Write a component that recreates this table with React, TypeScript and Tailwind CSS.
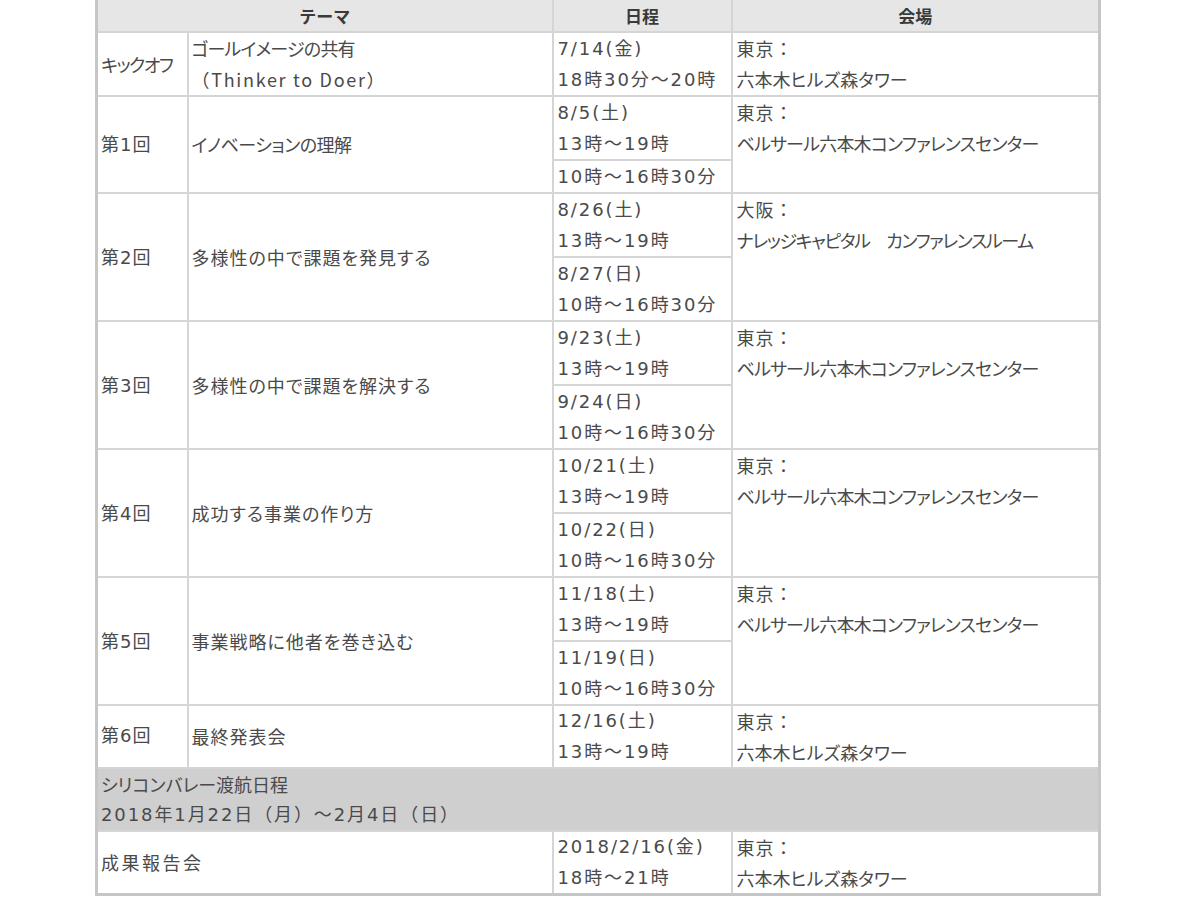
import React from "react";

const P = "[font-feature-settings:'palt']";
const TD = "border-2 border-[#d5d5d5] p-0 align-middle";
const LAT = "font-['DejaVu_Sans','Noto_Sans_CJK_JP',sans-serif]";

type Row = {
  label: string;
  theme: React.ReactNode;
  dates: string[][];
  city: string;
  place: string;
  placeCls: string;
};

const rows: Row[] = [
  {
    label: "キックオフ",
    theme: (
      <>
        <div className={`${P} tracking-[-0.8px]`}>ゴールイメージの共有</div>
        <div className="tracking-[1.7px]">（Thinker to Doer）</div>
      </>
    ),
    dates: [["7/14(金)", "18時30分〜20時"]],
    city: "東京：",
    place: "六本木ヒルズ森タワー",
    placeCls: "tracking-[0px]",
  },
  {
    label: "第1回",
    theme: <div className={`${P} tracking-[-0.5px]`}>イノベーションの理解</div>,
    dates: [["8/5(土)", "13時〜19時"], ["10時〜16時30分"]],
    city: "東京：",
    place: "ベルサール六本木コンファレンスセンター",
    placeCls: "tracking-[-0.8px]",
  },
  {
    label: "第2回",
    theme: <div className={P}>多様性の中で課題を発見する</div>,
    dates: [["8/26(土)", "13時〜19時"], ["8/27(日)", "10時〜16時30分"]],
    city: "大阪：",
    place: "ナレッジキャピタル　カンファレンスルーム",
    placeCls: "tracking-[-1.4px]",
  },
  {
    label: "第3回",
    theme: <div className={P}>多様性の中で課題を解決する</div>,
    dates: [["9/23(土)", "13時〜19時"], ["9/24(日)", "10時〜16時30分"]],
    city: "東京：",
    place: "ベルサール六本木コンファレンスセンター",
    placeCls: "tracking-[-0.8px]",
  },
  {
    label: "第4回",
    theme: <div className={P}>成功する事業の作り方</div>,
    dates: [["10/21(土)", "13時〜19時"], ["10/22(日)", "10時〜16時30分"]],
    city: "東京：",
    place: "ベルサール六本木コンファレンスセンター",
    placeCls: "tracking-[-0.8px]",
  },
  {
    label: "第5回",
    theme: <div className={P}>事業戦略に他者を巻き込む</div>,
    dates: [["11/18(土)", "13時〜19時"], ["11/19(日)", "10時〜16時30分"]],
    city: "東京：",
    place: "ベルサール六本木コンファレンスセンター",
    placeCls: "tracking-[-0.8px]",
  },
  {
    label: "第6回",
    theme: <div className={P}>最終発表会</div>,
    dates: [["12/16(土)", "13時〜19時"]],
    city: "東京：",
    place: "六本木ヒルズ森タワー",
    placeCls: "tracking-[0px]",
  },
];

function DateCell({ lines }: { lines: string[] }) {
  return (
    <td className={`${TD} ${LAT} pl-[4px] align-top tracking-[1.9px]`}>
      {lines.map((l) => (
        <div key={l}>{l}</div>
      ))}
    </td>
  );
}

function VenueCell({
  city,
  place,
  span,
  placeCls,
}: {
  city: string;
  place: string;
  span: number;
  placeCls: string;
}) {
  return (
    <td rowSpan={span} className={`${TD} pl-[4px] align-top tracking-[1px]`}>
      <div>{city}</div>
      <div className={`${P} ${placeCls}`}>{place}</div>
    </td>
  );
}

export default function App() {
  return (
    <div className="min-h-[900px] w-[1200px] bg-white font-['Noto_Sans_CJK_JP',sans-serif] text-[18px] text-[#4a4a4a]">
      <table className="ml-[95px] w-[1003px] table-fixed border-collapse border-[3px] border-t-0 border-[#c6c6c6] leading-[31px]">
        <colgroup>
          <col className="w-[91px]" />
          <col className="w-[365px]" />
          <col className="w-[179px]" />
          <col className="w-[368px]" />
        </colgroup>
        <thead>
          <tr className="bg-[#e6e6e6] text-[17px] font-bold text-[#3a3a3a]">
            <th colSpan={2} className={`${TD} border-t-0 h-[31px] text-center`}>テーマ</th>
            <th className={`${TD} border-t-0 text-center`}>日程</th>
            <th className={`${TD} border-t-0 text-center`}>会場</th>
          </tr>
        </thead>
        <tbody>
          {rows.map((r, i) => {
            const span = r.dates.length;
            const compact = i === rows.length - 1 ? "leading-[30.5px]" : "";
            return (
              <React.Fragment key={r.label}>
                <tr className={compact}>
                  <td
                    rowSpan={span}
                    className={`${TD} ${r.label === "キックオフ" ? `${P} tracking-[-1.5px]` : `${LAT} tracking-[1px]`} pl-[3px]`}
                  >
                    {r.label}
                  </td>
                  <td rowSpan={span} className={`${TD} pl-[3px] tracking-[1px]`}>
                    {r.theme}
                  </td>
                  <DateCell lines={r.dates[0]} />
                  <VenueCell city={r.city} place={r.place} span={span} placeCls={r.placeCls} />
                </tr>
                {r.dates.slice(1).map((d) => (
                  <tr key={d.join()}>
                    <DateCell lines={d} />
                  </tr>
                ))}
              </React.Fragment>
            );
          })}
          <tr className="bg-[#cfcfcf] leading-[30.5px]">
            <td colSpan={4} className={`${TD} pl-[3px]`}>
              <div className={`${P} tracking-[0px]`}>シリコンバレー渡航日程</div>
              <div className={`${LAT} tracking-[1.9px]`}>2018年1月22日（月）〜2月4日（日）</div>
            </td>
          </tr>
          <tr className="leading-[30.5px]">
            <td colSpan={2} className={`${TD} pl-[3px] tracking-[2.5px]`}>成果報告会</td>
            <DateCell lines={["2018/2/16(金)", "18時〜21時"]} />
            <VenueCell city="東京：" place="六本木ヒルズ森タワー" span={1} placeCls="tracking-[0px]" />
          </tr>
        </tbody>
      </table>
    </div>
  );
}
